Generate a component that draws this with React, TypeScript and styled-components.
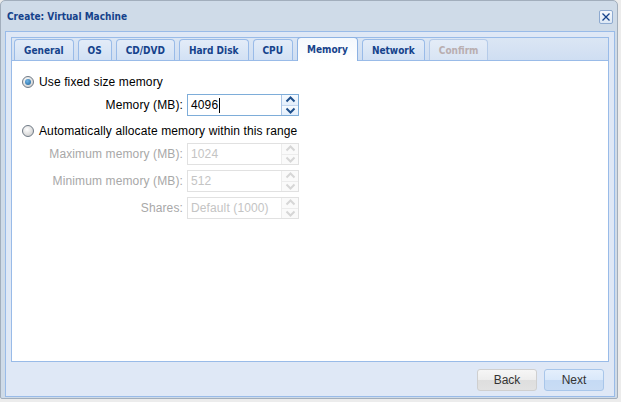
import React from "react";
import styled, { createGlobalStyle, css } from "styled-components";

const Global = createGlobalStyle`
  html, body { margin: 0; padding: 0; background: #ececec; }
  body { font-family: "Liberation Sans", Arial, sans-serif; font-size: 12px; }
  * { box-sizing: border-box; }
`;

const Win = styled.div`
  width: 618px;
  height: 399px;
  display: flex;
  flex-direction: column;
  background: #cfdbe8;
  border: 1px solid #a2aebc;
  border-radius: 5px 5px 2px 2px;
  padding: 0 2px 1px 4px;
`;

const Header = styled.div`
  height: 30px;
  flex: none;
  display: flex;
  align-items: center;
  justify-content: space-between;
  padding: 0 2px 0 2px;
`;

const Title = styled.div`
  font-family: "DejaVu Sans Condensed", "DejaVu Sans", sans-serif;
  font-stretch: condensed;
  font-weight: bold;
  font-size: 10px;
  color: #15428b;
  padding-top: 1px;
`;

const Close = styled.div`
  width: 14px;
  height: 14px;
  margin-top: 2px;
  border: 1px solid #8eaad0;
  border-radius: 2px;
  background: linear-gradient(#f4f8fd, #dde8f5);
  display: flex;
  align-items: center;
  justify-content: center;
`;

const Body = styled.div`
  flex: 1;
  display: flex;
  flex-direction: column;
  background: #dfe8f6;
  border: 1px solid #99bbe8;
  padding: 5px 5px 0 5px;
`;

const TabStrip = styled.div`
  flex: none;
  height: 23px;
  display: flex;
  align-items: flex-end;
  gap: 4px;
  padding: 0 0 0 2px;
  border: 1px solid #99bbe8;
  border-bottom: none;
  background: linear-gradient(#dbe6f4, #cfdef2);
`;

const Tab = styled.div<{ $active?: boolean; $disabled?: boolean }>`
  height: 21px;
  padding: 0 9px;
  display: flex;
  align-items: center;
  justify-content: center;
  font-family: "DejaVu Sans Condensed", "DejaVu Sans", sans-serif;
  font-stretch: condensed;
  font-weight: bold;
  font-size: 10px;
  color: #15428b;
  border: 1px solid #99bbe8;
  border-bottom: none;
  border-radius: 4px 4px 0 0;
  background: linear-gradient(#e3ecf8, #d2e1f4);
  ${(p) =>
    p.$disabled &&
    css`
      color: #b9aeb0;
      background: linear-gradient(#e4ecf7, #d8e4f4);
      border-color: #b5cbe9;
    `}
  ${(p) =>
    p.$active &&
    css`
      height: 24px;
      margin-bottom: -1px;
      position: relative;
      z-index: 1;
      background: linear-gradient(#f4f8fd, #ffffff);
      border-color: #8db2e3;
    `}
`;

const Content = styled.div`
  flex: 1;
  background: #fff;
  border: 1px solid #99bbe8;
  padding: 10px 10px;
  display: flex;
  flex-direction: column;
  letter-spacing: 0.12px;
`;

const RadioRow = styled.label<{ $mb: number }>`
  height: 22px;
  display: flex;
  align-items: center;
  gap: 5px;
  margin-bottom: ${(p) => p.$mb}px;
  color: #000;
`;

const Radio = styled.span<{ $on?: boolean }>`
  width: 12px;
  height: 12px;
  border-radius: 50%;
  border: 1px solid #6f7a86;
  background: radial-gradient(circle at 40% 35%, #ffffff, #d6d6d6 70%, #c0c0c0);
  display: flex;
  align-items: center;
  justify-content: center;
  &::after {
    content: "";
    display: ${(p) => (p.$on ? "block" : "none")};
    width: 6px;
    height: 6px;
    border-radius: 50%;
    background: radial-gradient(circle at 40% 35%, #6fb5e8, #1d5f95);
  }
`;

const FieldRow = styled.div<{ $mb: number }>`
  height: 22px;
  display: flex;
  align-items: center;
  margin-bottom: ${(p) => p.$mb}px;
`;

const Label = styled.div<{ $disabled?: boolean }>`
  width: 165px;
  padding-right: 4px;
  text-align: right;
  color: ${(p) => (p.$disabled ? "#a8a8a8" : "#000")};
`;

const Field = styled.div<{ $disabled?: boolean; $focus?: boolean }>`
  width: 112px;
  height: 22px;
  display: flex;
  border: 1px solid ${(p) => (p.$focus ? "#7eadd9" : p.$disabled ? "#e1e1e1" : "#b5b8c8")};
  background: #fff;
`;

const Value = styled.div<{ $disabled?: boolean }>`
  flex: 1;
  display: flex;
  align-items: center;
  padding-left: 3px;
  color: ${(p) => (p.$disabled ? "#c4c4c4" : "#000")};
`;

const Caret = styled.span`
  display: inline-block;
  width: 1px;
  height: 15px;
  background: #000;
  margin-left: 1px;
`;

const Spinner = styled.div<{ $disabled?: boolean }>`
  width: 17px;
  display: flex;
  flex-direction: column;
  border-left: 1px solid ${(p) => (p.$disabled ? "#ececec" : "#a9c4e6")};
`;

const SpinHalf = styled.div<{ $disabled?: boolean; $top?: boolean }>`
  flex: 1;
  display: flex;
  align-items: center;
  justify-content: center;
  background: ${(p) => (p.$disabled ? "#fafafa" : "linear-gradient(#f7fbff, #e3eefb)")};
  ${(p) => p.$top && css`border-bottom: 1px solid ${p.$disabled ? "#ececec" : "#c3d6ef"};`}
`;

const Footer = styled.div`
  height: 34px;
  flex: none;
  display: flex;
  align-items: center;
  justify-content: flex-end;
  gap: 7px;
  padding-right: 5px;
  padding-top: 1px;
`;

const Btn = styled.div<{ $primary?: boolean }>`
  width: 60px;
  height: 22px;
  border-radius: 3px;
  display: flex;
  align-items: center;
  justify-content: center;
  color: #333;
  font-size: 12px;
  border: 1px solid ${(p) => (p.$primary ? "#a8c6ea" : "#cfcfcf")};
  background: ${(p) =>
    p.$primary
      ? "linear-gradient(#e4effc 0%, #d9e8fa 50%, #c5daf4 50%, #c9dcf4 100%)"
      : "linear-gradient(#f6f6f6 0%, #ededed 50%, #dedede 50%, #e2e2e2 100%)"};
`;

const Chevron = ({ up, disabled }: { up?: boolean; disabled?: boolean }) => (
  <svg width="11" height="7" viewBox="0 0 11 7">
    <path
      d={up ? "M1.5 5.5 L5.5 1.5 L9.5 5.5" : "M1.5 1.5 L5.5 5.5 L9.5 1.5"}
      fill="none"
      stroke={disabled ? "#d6d6d6" : "#1e4f8c"}
      strokeWidth="2"
    />
  </svg>
);

const NumberField = ({
  value,
  disabled,
  focus,
}: {
  value: string;
  disabled?: boolean;
  focus?: boolean;
}) => (
  <Field $disabled={disabled} $focus={focus}>
    <Value $disabled={disabled}>
      {value}
      {focus && <Caret />}
    </Value>
    <Spinner $disabled={disabled}>
      <SpinHalf $top $disabled={disabled}>
        <Chevron up disabled={disabled} />
      </SpinHalf>
      <SpinHalf $disabled={disabled}>
        <Chevron disabled={disabled} />
      </SpinHalf>
    </Spinner>
  </Field>
);

const tabs = ["General", "OS", "CD/DVD", "Hard Disk", "CPU", "Memory", "Network", "Confirm"];

export default function App() {
  return (
    <>
      <Global />
      <Win>
        <Header>
          <Title>Create: Virtual Machine</Title>
          <Close>
            <svg width="10" height="10" viewBox="0 0 10 10">
              <path d="M1.5 1.5 L8.5 8.5 M8.5 1.5 L1.5 8.5" stroke="#15428b" strokeWidth="1.3" />
            </svg>
          </Close>
        </Header>
        <Body>
          <TabStrip>
            {tabs.map((t) => (
              <Tab key={t} $active={t === "Memory"} $disabled={t === "Confirm"}>
                {t}
              </Tab>
            ))}
          </TabStrip>
          <Content>
            <RadioRow $mb={1}>
              <Radio $on />
              Use fixed size memory
            </RadioRow>
            <FieldRow $mb={4}>
              <Label>Memory (MB):</Label>
              <NumberField value="4096" focus />
            </FieldRow>
            <RadioRow $mb={1}>
              <Radio />
              Automatically allocate memory within this range
            </RadioRow>
            <FieldRow $mb={5}>
              <Label $disabled>Maximum memory (MB):</Label>
              <NumberField value="1024" disabled />
            </FieldRow>
            <FieldRow $mb={5}>
              <Label $disabled>Minimum memory (MB):</Label>
              <NumberField value="512" disabled />
            </FieldRow>
            <FieldRow $mb={5}>
              <Label $disabled>Shares:</Label>
              <NumberField value="Default (1000)" disabled />
            </FieldRow>
          </Content>
          <Footer>
            <Btn>Back</Btn>
            <Btn $primary>Next</Btn>
          </Footer>
        </Body>
      </Win>
    </>
  );
}
